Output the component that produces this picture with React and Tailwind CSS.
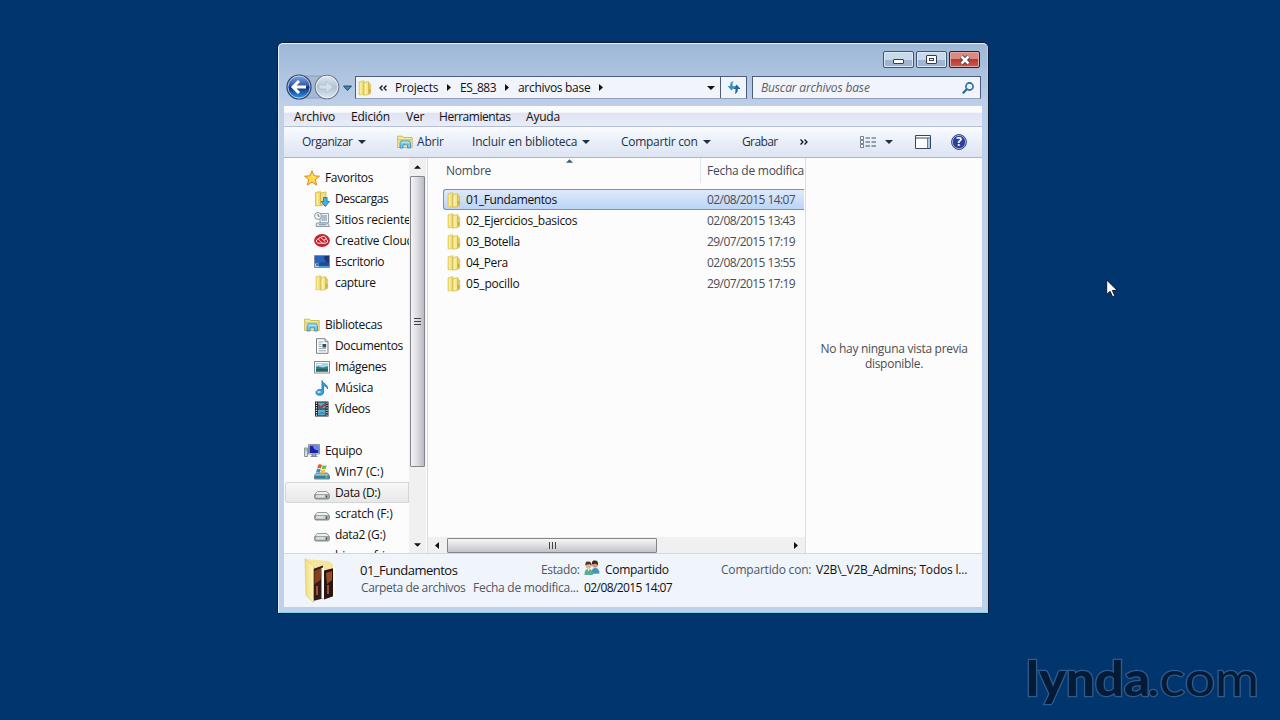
import clsx from "clsx";

const FolderIcon = ({ className }) => (
  <svg viewBox="0 0 16 16" className={clsx("w-4 h-4 shrink-0", className)}>
    <path d="M2 1.800L6.200.700h.8V14.500L2 15z" fill="#efdc74" stroke="#dcc45a" strokeWidth=".6" />
    <path d="M6 2h6.500v12L6 14.800z" fill="#e3cb55" />
    <path d="M6.800 2.500L11.500 1.500v13l-4.700.8z" fill="#f5e789" stroke="#cfb347" strokeWidth=".6" />
    <path d="M11.700 3.500l2 .8v9l-2 .9z" fill="#e8d162" stroke="#c8aa45" strokeWidth=".5" />
    <path d="M12.800 9v3.500" stroke="#a98f3c" strokeWidth=".8" />
    <path d="M3.800 2.500v11.500M8.600 3.500v10.500" stroke="#fbf3b4" strokeWidth="1.200" />
  </svg>
);

const LibraryIcon = ({ className }) => (
  <svg viewBox="0 0 16 16" className={clsx("w-4 h-4 shrink-0", className)}>
    <path d="M.6 13.500V2.200h5l1 1.300h8.600v10z" fill="#f8e795" stroke="#c9a946" strokeWidth=".8" />
    <path d="M1.500 5h13v2h-13z" fill="#b9dc82" />
    <path d="M3 14V9.200C3 7.600 4.200 7 5.500 7h5.300c1.500 0 2.700.7 2.700 2.200V14h-3v-3.200H6V14z" fill="#79c7ec" stroke="#3285ba" strokeWidth=".8" />
    <path d="M4.200 9.200c.3-.9.900-1.100 1.600-1.100h5c.8 0 1.300.4 1.500 1.100" stroke="#dff4ff" fill="none" />
  </svg>
);

const StarIcon = () => (
  <svg viewBox="0 0 16 16" className="w-4 h-4 shrink-0">
    <path d="M8 .8l2.100 5 5.400.4-4.200 3.500 1.400 5.400L8 12.100l-4.700 3 1.400-5.400L.5 6.200l5.400-.4z" fill="#ffd84c" stroke="#e07b16" strokeWidth=".9" strokeLinejoin="round" />
    <path d="M8 3l1.200 3.700H12L9 8z" fill="#fff6b5" />
  </svg>
);

const DownloadsIcon = () => (
  <svg viewBox="0 0 16 16" className="w-4 h-4 shrink-0">
    <path d="M1.500 1.500L6.500.5V14.500l-5 .5z" fill="#efdc74" stroke="#d4b449" strokeWidth=".7" />
    <path d="M3.500 2.500v11.500" stroke="#fbf3b4" strokeWidth="1.200" />
    <path d="M6.500 2L12 1v12.500l-5.500 1.200z" fill="#f3df79" stroke="#ccab3d" strokeWidth=".7" />
    <path d="M9.500 6.500h3.600v4h2.400l-4.200 5-4.200-5h2.400z" fill="#43b0ea" stroke="#1769a8" strokeWidth=".8" />
  </svg>
);

const RecentIcon = () => (
  <svg viewBox="0 0 16 16" className="w-4 h-4 shrink-0">
    <path d="M6 1.500h8.500v9.500H6z" fill="#f1f6fa" stroke="#788995" strokeWidth=".8" />
    <path d="M7.500 4H13M7.500 6H13M7.500 8H13" stroke="#68839b" />
    <path d="M2.500 11h11l2 3.500H2z" fill="#dce4e9" stroke="#788995" strokeWidth=".8" />
    <path d="M5 12.700h7" stroke="#7f929f" />
    <circle cx="4" cy="4" r="3.400" fill="#fff" stroke="#75838d" strokeWidth=".9" />
    <path d="M4 2v2.200h1.700" fill="none" stroke="#54616c" strokeWidth=".9" />
  </svg>
);

const CloudIcon = () => (
  <svg viewBox="0 0 16 16" className="w-4 h-4 shrink-0">
    <ellipse cx="8" cy="7.500" rx="7.900" ry="6.500" fill="#c9202c" />
    <path d="M8.200 10L5.300 7.300c-.9-.9-.7-2 .1-2.500.8-.5 1.600-.3 2.300.4l3.200 3.200M4.300 6c-1.700.2-2.400 1.700-1.700 3 1 1.600 3 1.200 4.800 1.200h4c2.100 0 2.700-2 1.800-3.300-.8-1.100-2-.9-2.900-.1M7 4c2.300-1.500 4.700-.5 5.200 1.700" fill="none" stroke="#fff" strokeWidth="1" strokeLinecap="round" />
  </svg>
);

const DesktopIcon = () => (
  <svg viewBox="0 0 16 16" className="w-4 h-4 shrink-0">
    <path d="M.5 1.500h15v12H.5z" fill="#234b91" stroke="#7b8793" strokeWidth=".8" />
    <path d="M1 2h14v6C9 7 5 9 1 11z" fill="#2863bb" />
    <path d="M10 2h5v7c-3-.5-5-3-5-7z" fill="#1b3979" />
    <path d="M1 12.500h14" stroke="#4c9ddd" />
    <path d="M1 9.500h3.500V13H1z" fill="#b9e2fa" />
    <path d="M1.700 12.300l2-2m-1.700 0h1.700v1.700" fill="none" stroke="#174e91" strokeWidth=".8" />
  </svg>
);

const DocumentIcon = () => (
  <svg viewBox="0 0 16 16" className="w-4 h-4 shrink-0">
    <path d="M2.500.7H11l3 3v11.600H2.500z" fill="#fdfdfd" stroke="#6c7277" strokeWidth=".9" />
    <path d="M11 .7v3h3" fill="#dce1e6" stroke="#6c7277" strokeWidth=".8" />
    <path d="M4.500 4h5M4.500 6.200h3.200M4.500 8.400h3.200M4.500 10.600H12M4.500 12.800H12" stroke="#8d989f" strokeWidth=".9" />
    <path d="M8.500 6h3.700v3.500H8.500z" fill="#27516e" />
  </svg>
);

const PictureIcon = () => (
  <svg viewBox="0 0 16 16" className="w-4 h-4 shrink-0">
    <path d="M.5 2.500h15v11.500H.5z" fill="#fff" stroke="#727c85" strokeWidth=".9" />
    <path d="M2 4h12v8.500H2z" fill="#9fd7ee" />
    <path d="M2 8c3-2 4 1 7 .5 2-.3 3-1 5-1v5H2z" fill="#287f9d" />
    <path d="M2 10.500c4-1 8-1 12 0v2H2z" fill="#38623d" />
    <path d="M3 5.500h5" stroke="#fff" />
  </svg>
);

const MusicIcon = () => (
  <svg viewBox="0 0 16 16" className="w-4 h-4 shrink-0">
    <path d="M8 .5c1 3.300 6 3.500 5.500 8.500-.3-2-2-3-3.900-3.500V12c0 2-1.700 3.300-3.900 3.300s-3.800-1-3.800-2.700 1.800-3.100 3.900-3.100c.8 0 1.700.2 2.200.5z" fill="#3ba1da" stroke="#206da8" strokeWidth=".8" />
    <ellipse cx="5" cy="12" rx="1.800" ry="1.100" fill="#b0e4fa" />
  </svg>
);

const VideoIcon = () => (
  <svg viewBox="0 0 16 16" className="w-4 h-4 shrink-0">
    <path d="M1 .5h13.500v15H1z" fill="#1c252b" />
    <path d="M4 1.500h7.500v6H4zM4 8.500h7.500v6H4z" fill="#58afd4" />
    <path d="M4 3l3 2 4.500-3.500v3L8 7H4z" fill="#a34448" />
    <path d="M5 13l3-1.500L11 13" stroke="#2f7396" fill="none" />
    <path d="M2.500 1.500v14M13 1.500v14" stroke="#f3f5f6" strokeWidth="1.200" strokeDasharray="1.200 1.200" />
  </svg>
);

const ComputerIcon = () => (
  <svg viewBox="0 0 16 16" className="w-4 h-4 shrink-0">
    <path d="M.6 5h3v8.500h-3z" fill="#d7dfe5" stroke="#6b7983" strokeWidth=".8" />
    <path d="M1.400 7h1.400" stroke="#36a256" />
    <path d="M4.500 1.500h11V11h-11z" fill="#dde3e9" stroke="#727d87" strokeWidth=".8" />
    <path d="M5.500 2.500h9V10h-9z" fill="#1c25a5" />
    <path d="M9 2.500h5.500v4.800C11 7.500 9 5.500 9 2.500z" fill="#6f87e8" />
    <path d="M8 11h4v2H8zM6.500 13.500h7" fill="#b6c0c8" stroke="#6e7982" strokeWidth=".8" />
  </svg>
);

const WinDriveIcon = () => (
  <svg viewBox="0 0 16 16" className="w-4 h-4 shrink-0">
    <path d="M2.500 9h11l2 2.500v3.500H.5v-3.500z" fill="#a5bcc5" stroke="#4e7480" strokeWidth=".8" />
    <path d="M1 11.700h14v2.800H1z" fill="#367f96" />
    <path d="M12.500 12.200v1.500" stroke="#75f07d" strokeWidth="1.500" />
    <path d="M4.200.8C6-.1 7 .5 8 1L7 4.500C5.800 4 4.800 3.800 3.200 4.500z" fill="#e95b2d" />
    <path d="M8.700 1.300c1.400.7 2.500.6 4 0L11.600 4.800c-1.300.6-2.600.5-3.900 0z" fill="#70ba3e" />
    <path d="M2.900 5.300c1.500-.7 2.700-.5 3.900 0L5.800 8.800c-1.300-.6-2.500-.6-3.900 0z" fill="#3390d5" />
    <path d="M7.400 5.600c1.400.6 2.600.6 4 0l-1.100 3.500c-1.300.6-2.600.5-3.900 0z" fill="#f6c42e" />
  </svg>
);

const DriveIcon = () => (
  <svg viewBox="0 0 16 16" className="w-4 h-4 shrink-0">
    <path d="M3.200 6.500h9.600l2.500 3v3.300c0 .8-.5 1.200-1.300 1.200H2c-.8 0-1.300-.4-1.300-1.200V9.500z" fill="#eceeef" stroke="#8b9195" strokeWidth=".9" />
    <path d="M1 9.700h14v3c0 .5-.3.900-1 .9H2c-.7 0-1-.4-1-.9z" fill="#c3c8ca" stroke="#697276" strokeWidth=".7" />
    <path d="M2.500 11h8" stroke="#f9fafa" />
    <path d="M12.500 10.500v2.300" stroke="#2e5930" strokeWidth="1.600" />
  </svg>
);

const UsersIcon = () => (
  <svg viewBox="0 0 16 16" className="w-4 h-4 shrink-0 -mt-1">
    <path d="M7.500 14c0-4 1-6 3.700-6s4.300 2 4.300 5.500z" fill="#4a91ba" />
    <circle cx="11" cy="5" r="2.800" fill="#d49871" />
    <path d="M8 4.500C7.500 1 9 .5 11 .5s3.500 1 3 5c-1-2-3-2.500-6-1z" fill="#41291f" />
    <path d="M.5 15c0-4 1-6 4-6s4.500 2 4.500 6z" fill="#5aae92" />
    <circle cx="4.500" cy="6" r="2.800" fill="#e5b48b" />
    <path d="M1.500 5.500C1 2 2.500 1.500 4.500 1.500S8 3 7.500 6c-1-2-3-2.500-6-.5z" fill="#50322a" />
    <path d="M3.500 9.300l1 2 1-2" fill="#fff" />
  </svg>
);

const BigFolderIcon = () => (
  <svg viewBox="0 0 34 46" className="w-[34px] h-[46px] shrink-0">
    <defs>
      <linearGradient id="flap" x1="0" x2="1">
        <stop offset="0" stopColor="#f0dc81" />
        <stop offset="1" stopColor="#fdf6ba" />
      </linearGradient>
    </defs>
    <path d="M2 1l23 2 4 3v5l-19 8z" fill="#f4e6a0" />
    <path d="M9 11l10-3.500v33L9 43z" fill="#341d19" />
    <path d="M10.500 13l7-3-1 12-6 4z" fill="#87401f" />
    <path d="M17.500 10l2.500-.8V40l-2.500.7z" fill="#fff" />
    <path d="M20 12.500l10-2.500V38l-10 3.500z" fill="#271614" />
    <path d="M22 15l6-2v9l-5 4z" fill="#974b27" />
    <path d="M13 28v9M24 27v9" stroke="#c8633d" strokeWidth="1.500" />
    <path d="M29 10l2.500-.5V38l-2.500.7z" fill="#fffaf0" />
    <path d="M1 .500l8.500 7.500v36.500l-7.500-7z" fill="url(#flap)" stroke="#dcc66e" strokeWidth=".6" />
  </svg>
);

const Arrow = ({ className }) => (
  <svg viewBox="0 0 8 4" className={clsx("h-1 shrink-0", className || "w-2")}>
    <path d="M0 0h8L4 4z" fill="currentColor" />
  </svg>
);

const Crumb = ({ className }) => (
  <svg viewBox="0 0 4 7" className={clsx("w-1 h-[7px] shrink-0", className)}>
    <path d="M0 0l4 3.500L0 7z" fill="#111" />
  </svg>
);

const tree = [
  { label: "Favoritos", icon: StarIcon, root: true, track: "tracking-[-0.35px]" },
  { label: "Descargas", icon: DownloadsIcon, track: "tracking-[-0.45px]" },
  { label: "Sitios recientes", icon: RecentIcon, track: "tracking-[-0.2px]" },
  { label: "Creative Cloud Files", icon: CloudIcon, track: "tracking-[-0.2px]" },
  { label: "Escritorio", icon: DesktopIcon, track: "tracking-[-0.35px]" },
  { label: "capture", icon: FolderIcon, track: "tracking-[-0.35px]" },
  null,
  { label: "Bibliotecas", icon: LibraryIcon, root: true, track: "tracking-[-0.3px]" },
  { label: "Documentos", icon: DocumentIcon, track: "tracking-[-0.35px]" },
  { label: "Imágenes", icon: PictureIcon, track: "tracking-[-0.35px]" },
  { label: "Música", icon: MusicIcon, track: "tracking-[-0.2px]" },
  { label: "Vídeos", icon: VideoIcon, track: "tracking-[-0.35px]" },
  null,
  { label: "Equipo", icon: ComputerIcon, root: true, track: "tracking-[-0.3px]" },
  { label: "Win7 (C:)", icon: WinDriveIcon, track: "tracking-[-0.1px]" },
  { label: "Data (D:)", icon: DriveIcon, active: true, track: "tracking-[-0.35px]" },
  { label: "scratch (F:)", icon: DriveIcon, track: "tracking-[-0.2px]" },
  { label: "data2 (G:)", icon: DriveIcon, track: "tracking-[-0.35px]" },
  { label: "bimco_fri", track: "tracking-[-0.2px]" },
];

const files = [
  { name: "01_Fundamentos", date: "02/08/2015 14:07", active: true, track: "tracking-[-0.4px]" },
  { name: "02_Ejercicios_basicos", date: "02/08/2015 13:43", track: "tracking-[-0.3px]" },
  { name: "03_Botella", date: "29/07/2015 17:19", track: "tracking-[-0.4px]" },
  { name: "04_Pera", date: "02/08/2015 13:55", track: "tracking-[-0.4px]" },
  { name: "05_pocillo", date: "29/07/2015 17:19", track: "tracking-[-0.2px]" },
];

const TitleBar = () => (
  <div className="h-[29px] flex justify-end gap-0.5 pt-[7px] pr-[2px] shrink-0">
    <button className="w-[31px] h-[17px] border border-[#405576] rounded-[2px] flex items-center justify-center bg-linear-to-b from-[#c9d9ec] from-50% to-[#9fb6d3] to-50% shadow-[inset_0_0_0_1px_#dce8f5]">
      <span className="w-[11px] h-[5px] mt-1 border border-[#333c50] bg-white rounded-[1px]" />
    </button>
    <button className="w-[31px] h-[17px] border border-[#405576] rounded-[2px] flex items-center justify-center bg-linear-to-b from-[#c9d9ec] from-50% to-[#9fb6d3] to-50% shadow-[inset_0_0_0_1px_#dce8f5]">
      <span className="w-[11px] h-[9px] border border-[#333c50] bg-white rounded-[1px] flex items-center justify-center">
        <span className="w-[5px] h-[3px] border border-[#333c50]" />
      </span>
    </button>
    <button className="w-[31px] h-[17px] border border-[#48171c] rounded-[2px] flex items-center justify-center bg-linear-to-b from-[#d98b82] from-45% via-[#b83a30] via-50% to-[#cb5a4c] shadow-[inset_0_0_0_1px_#e5aaa5]">
      <svg viewBox="0 0 12 10" className="w-3 h-2.5">
        <path d="M2.500 1.500l7 7m0-7l-7 7" stroke="#4c3038" strokeWidth="4.300" />
        <path d="M2.500 1.500l7 7m0-7l-7 7" stroke="#fff" strokeWidth="2.600" />
      </svg>
    </button>
  </div>
);

const AddressRow = () => (
  <div className="h-[33px] flex items-start shrink-0">
    <svg viewBox="0 0 70 30" className="w-[70px] h-[30px] shrink-0">
      <defs>
        <linearGradient id="back" x2="0" y2="1">
          <stop offset="0" stopColor="#8ba9df" />
          <stop offset=".45" stopColor="#3158a8" />
          <stop offset=".5" stopColor="#0d2d80" />
          <stop offset="1" stopColor="#2f9ee8" />
        </linearGradient>
        <linearGradient id="fwd" x2="0" y2="1">
          <stop offset="0" stopColor="#e4ebf3" />
          <stop offset=".5" stopColor="#b2c2d5" />
          <stop offset="1" stopColor="#dce8f3" />
        </linearGradient>
      </defs>
      <path d="M15 3h28c4 0 4 4 9 8v5c-5 3-5 9-10 9H15z" fill="#a5b9d2" stroke="#8398b6" strokeWidth=".8" />
      <circle cx="15" cy="14" r="12" fill="url(#back)" stroke="#34466e" strokeWidth="1.200" />
      <circle cx="15" cy="14" r="11" fill="none" stroke="#c8dcf3" strokeWidth=".8" />
      <path d="M15 8l-6 6 6 6M9.500 14H22" fill="none" stroke="#fff" strokeWidth="3" />
      <circle cx="43" cy="14" r="11.800" fill="url(#fwd)" stroke="#64758d" strokeWidth="1.100" />
      <circle cx="43" cy="14" r="10.800" fill="none" stroke="#f4f8fc" strokeWidth=".8" />
      <path d="M42 8l7 6-7 6v-4h-7v-4h7z" fill="#d5dfe9" stroke="#b3c1d0" strokeWidth=".8" />
      <path d="M59.500 13h8l-4 4.500z" fill="#3e8aac" stroke="#244e70" />
    </svg>
    <div className="w-[392px] h-[23px] mt-[3px] ml-px flex border border-[#4b5d7a] border-b-[#8ea0b8] bg-[#f1f5fb] shrink-0">
      <div className="flex-1 flex items-center pl-px">
        <FolderIcon />
        <svg viewBox="0 0 8 6" className="w-2 h-1.5 ml-1.5 mr-2">
          <path d="M3.500.5L1 3l2.500 2.500M7.500.5L5 3l2.500 2.500" fill="none" stroke="#111" strokeWidth="1.300" />
        </svg>
        <span className="w-[52px] shrink-0 tracking-[-0.2px]">Projects</span>
        <Crumb />
        <span className="w-[54px] shrink-0 pl-[9px] tracking-[-0.5px]">ES_883</span>
        <Crumb />
        <span className="w-[90px] shrink-0 pl-[9px] tracking-[-0.3px]">archivos base</span>
        <Crumb />
        <Arrow className="w-2 ml-auto mr-[5px]" />
      </div>
      <div className="w-[26px] border-l border-[#4b5d7a] flex items-center justify-center">
        <svg viewBox="0 0 14 13" className="w-3.5 h-[13px]">
          <path d="M6.500 0C4 .5 3 2.500 3.200 5H.5L4.500 9.500 8 5H5.600C5.500 3 5.600 1.500 6.500 0z" fill="#3594bd" />
          <path d="M7.500 13c2.500-.5 3.500-2.500 3.300-5h2.700L9.700 3.500 6 8h2.500c0 2 0 3.500-1 5z" fill="#24679d" />
        </svg>
      </div>
    </div>
    <div className="w-[229px] h-[23px] mt-[3px] ml-[5px] pl-2 pr-1.5 flex items-center border border-[#4b5d7a] border-b-[#8ea0b8] bg-[#f1f5fb] shrink-0">
      <span className="italic text-[#5c6069] tracking-[-0.15px]">Buscar archivos base</span>
      <svg viewBox="0 0 12 12" className="w-3 h-3 ml-auto">
        <circle cx="7.500" cy="4.500" r="3.600" fill="#e6f3fc" stroke="#29699b" strokeWidth="1.600" />
        <path d="M5 7L.8 11.300" stroke="#29699b" strokeWidth="2.200" />
      </svg>
    </div>
  </div>
);

const MenuBar = () => (
  <div className="h-[21px] pt-0.5 flex items-center pl-[10px] shrink-0 border-b border-[#b5bfd3] bg-linear-to-b from-[#fbfcfe] from-30% via-[#e0e3f2] via-38% to-[#e9edf8]">
    <span className="w-[57px] tracking-[-0.1px]">Archivo</span>
    <span className="w-[55px] tracking-[-0.2px]">Edición</span>
    <span className="w-[33px] tracking-[-0.2px]">Ver</span>
    <span className="w-[87px] tracking-[-0.45px]">Herramientas</span>
    <span className="tracking-[-0.2px]">Ayuda</span>
  </div>
);

const ToolBar = () => (
  <div className="h-[31px] flex items-center pl-[18px] shrink-0 text-[#1e3145] border-b border-[#a7b6cc] bg-linear-to-b from-[#fafcff] via-[#e9eff9] via-50% to-[#dde4f2]">
    <span className="w-14 tracking-[-0.5px]">Organizar</span>
    <Arrow />
    <LibraryIcon className="ml-[31px]" />
    <span className="w-[55px] ml-1 tracking-[-0.2px]">Abrir</span>
    <span className="w-[110px] tracking-[-0.2px]">Incluir en biblioteca</span>
    <Arrow />
    <span className="w-[82px] ml-[31px] tracking-[-0.3px]">Compartir con</span>
    <Arrow />
    <span className="w-[58px] ml-[31px] tracking-[-0.6px]">Grabar</span>
    <svg viewBox="0 0 8 6" className="w-2 h-1.5">
      <path d="M.5.500L3 3 .5 5.500M4.500.5L7 3 4.500 5.500" fill="none" stroke="#111" strokeWidth="1.300" />
    </svg>
    <svg viewBox="0 0 16 12" className="w-4 h-3 ml-[52px]">
      <path d="M.5.500h3v3h-3zM.5 4.500h3v3h-3zM.5 8.500h3v3h-3z" fill="#fff" stroke="#66727d" strokeWidth=".9" />
      <path d="M5.500 2H10M11.500 2H16M5.500 6H10M11.500 6H16M5.500 10H10M11.500 10H16" stroke="#3e5164" />
    </svg>
    <Arrow className="w-2 ml-[9px]" />
    <svg viewBox="0 0 16 14" className="w-4 h-3.5 ml-[22px]">
      <path d="M.5.500h15v13H.5z" fill="#fff" stroke="#34475c" />
      <path d="M1 3h14" stroke="#34475c" />
      <path d="M12.500 3v10" stroke="#5e7f9e" />
      <path d="M13 4h2v9h-2z" fill="#a9c9e8" />
    </svg>
    <svg viewBox="0 0 16 16" className="w-4 h-4 ml-5">
      <circle cx="8" cy="8" r="7.400" fill="#2b3e9e" stroke="#3a4970" />
      <circle cx="8" cy="8" r="6.600" fill="none" stroke="#b7c4eb" strokeWidth=".8" />
      <text x="8" y="12.300" textAnchor="middle" fontSize="12" fontWeight="700" fill="#fff">?</text>
    </svg>
  </div>
);

const Sidebar = () => (
  <div className="w-[125px] pt-[9px] pl-px overflow-hidden shrink-0">
    {tree.map((item, i) => {
      if (!item) return <div key={i} className="h-[21px]" />;
      const Icon = item.icon;
      return (
        <div
          key={i}
          className={clsx(
            "h-[21px] flex items-center whitespace-nowrap overflow-hidden",
            item.root ? "pl-[19px]" : "pl-[29px]",
            item.active && "bg-linear-to-b from-[#f8f8f8] to-[#e7e7e7] rounded-l-[3px] shadow-[inset_0_0_0_1px_#d5d5d5]"
          )}
        >
          {Icon ? <Icon /> : <span className="w-4" />}
          <span className={clsx("ml-[5px]", item.track)}>{item.label}</span>
        </div>
      );
    })}
  </div>
);

const SideScroll = () => (
  <div className="w-[17px] pl-px flex flex-col bg-[#f0f0f1] shrink-0">
    <div className="h-[18px] flex items-center pl-1">
      <Arrow className="w-[7px] rotate-180" />
    </div>
    <div className="w-[15px] h-[291px] border border-[#83868b] rounded-[1px] bg-linear-to-r from-[#f4f4f5] via-[#dcdce0] to-[#b9bac2] flex flex-col gap-[2px] items-center justify-center">
      <span className="w-[7px] h-px bg-[#444]" />
      <span className="w-[7px] h-px bg-[#444]" />
      <span className="w-[7px] h-px bg-[#444]" />
    </div>
    <Arrow className="w-[7px] mt-auto mb-1.5 ml-1" />
  </div>
);

const FileList = () => (
  <div className="w-[378px] flex flex-col border-r border-[#d5dfea] shrink-0">
    <div className="h-[31px] flex text-[#3f4b5c] whitespace-nowrap">
      <div className="w-[273px] h-[25px] pl-[18px] flex items-center border-r border-[#dfe6ef] relative">
        <span className="tracking-[-0.2px]">Nombre</span>
        <Arrow className="w-[7px] absolute left-[138px] top-px rotate-180 text-[#3c5e77]" />
      </div>
      <div className="flex-1 h-[25px] pl-[6px] mr-px flex items-center overflow-hidden">
        <span className="tracking-[-0.25px]">Fecha de modificación</span>
      </div>
    </div>
    {files.map((file) => (
      <div
        key={file.name}
        className={clsx(
          "h-[21px] ml-[15px] mr-px pl-[2px] flex items-center border border-r-0 rounded-l-[3px] whitespace-nowrap",
          file.active ? "border-[#7196bd] bg-linear-to-b from-[#dfeafb] to-[#bcd4f6]" : "border-transparent"
        )}
      >
        <FolderIcon />
        <span className={clsx("w-[241px] ml-1", file.track)}>{file.name}</span>
        <span className="text-[#4b4d55] tracking-[-0.58px]">{file.date}</span>
      </div>
    ))}
    <div className="h-4 mt-auto flex items-center bg-[#f0f0f1]">
      <Crumb className="rotate-180 ml-[7px]" />
      <div className="w-[210px] h-[15px] ml-2 border border-[#83868b] rounded-[1px] bg-linear-to-b from-[#f6f6f6] via-[#dedee1] to-[#c2c3c9] flex gap-[2px] items-center justify-center">
        <span className="w-px h-[7px] bg-[#444]" />
        <span className="w-px h-[7px] bg-[#444]" />
        <span className="w-px h-[7px] bg-[#444]" />
      </div>
      <Crumb className="ml-auto mr-[7px]" />
    </div>
  </div>
);

const Details = () => (
  <div className="flex-1 flex pl-5 pt-1 bg-[#f0f4fb] border-t border-[#cfd9e7] whitespace-nowrap">
    <BigFolderIcon />
    <div className="ml-[22px] pt-[3px]">
      <div className="h-[18px] flex items-center">
        <span className="w-[181px] text-[13px] tracking-[-0.5px]">01_Fundamentos</span>
        <span className="w-[43px] text-[#4d5766] tracking-[-0.35px]">Estado:</span>
        <UsersIcon />
        <span className="w-[116px] ml-[5px] tracking-[-0.3px]">Compartido</span>
        <span className="w-[95px] text-[#4d5766] tracking-[-0.2px]">Compartido con:</span>
        <span className="tracking-[-0.2px]">V2B\_V2B_Admins; Todos l...</span>
      </div>
      <div className="h-[18px] flex items-center">
        <span className="w-[112px] ml-px text-[#4d5766] tracking-[-0.35px]">Carpeta de archivos</span>
        <span className="w-[111px] text-[#4d5766] tracking-[-0.25px]">Fecha de modifica...</span>
        <span className="tracking-[-0.58px]">02/08/2015 14:07</span>
      </div>
    </div>
  </div>
);

export default function App() {
  return (
    <div className="w-[1280px] h-[720px] relative overflow-hidden bg-[#01356d] font-['Open_Sans','Noto_Sans',sans-serif] text-[12px] leading-[18px] text-[#111]">
      <div className="absolute left-[277px] top-[42px] w-[712px] h-[572px] rounded-t-[6px] border border-[#0b1a35] bg-[#bfd0e9] overflow-hidden">
        <div className="h-full border border-[#e6f1fb] border-b-[#7fd5ee] border-r-[#9ddcf2] rounded-t-[5px] px-[5px] pb-[5px] flex flex-col bg-linear-to-b from-[#9db8d6] to-[#bfd0ea] to-[64px]">
          <TitleBar />
          <AddressRow />
          <MenuBar />
          <ToolBar />
          <div className="h-[395px] flex bg-[#fcfcfc] shrink-0">
            <Sidebar />
            <SideScroll />
            <div className="w-0.5 border-r border-[#cfdcea] shrink-0" />
            <FileList />
            <div className="flex-1 flex items-center justify-center text-center leading-[15px] text-[#4c4c52] tracking-[-0.28px]">
              No hay ninguna vista previa
              <br />
              disponible.
            </div>
          </div>
          <Details />
        </div>
      </div>

      {/* cursor */}
      <svg viewBox="0 0 12 19" className="absolute left-[1106px] top-[279px] w-3 h-[19px]">
        <path d="M.7 1v14.500l3.400-3.200 2.400 5.400 2.300-1-2.400-5.300h4.800z" fill="#fff" stroke="#081a35" />
      </svg>

      {/* watermark */}
      <svg viewBox="0 0 250 60" className="absolute left-[1020px] top-[650px] w-[250px] h-[60px] font-['Lato',sans-serif]">
        <g fill="#041b38" stroke="#2f5a8c" strokeWidth="2.500" paintOrder="stroke">
          <text x="6" y="45.500" fontSize="48" fontWeight="900" textLength="124" lengthAdjust="spacingAndGlyphs">lynda</text>
          <text x="127" y="45.500" fontSize="48" textLength="112" lengthAdjust="spacingAndGlyphs">.com</text>
        </g>
      </svg>
    </div>
  );
}
